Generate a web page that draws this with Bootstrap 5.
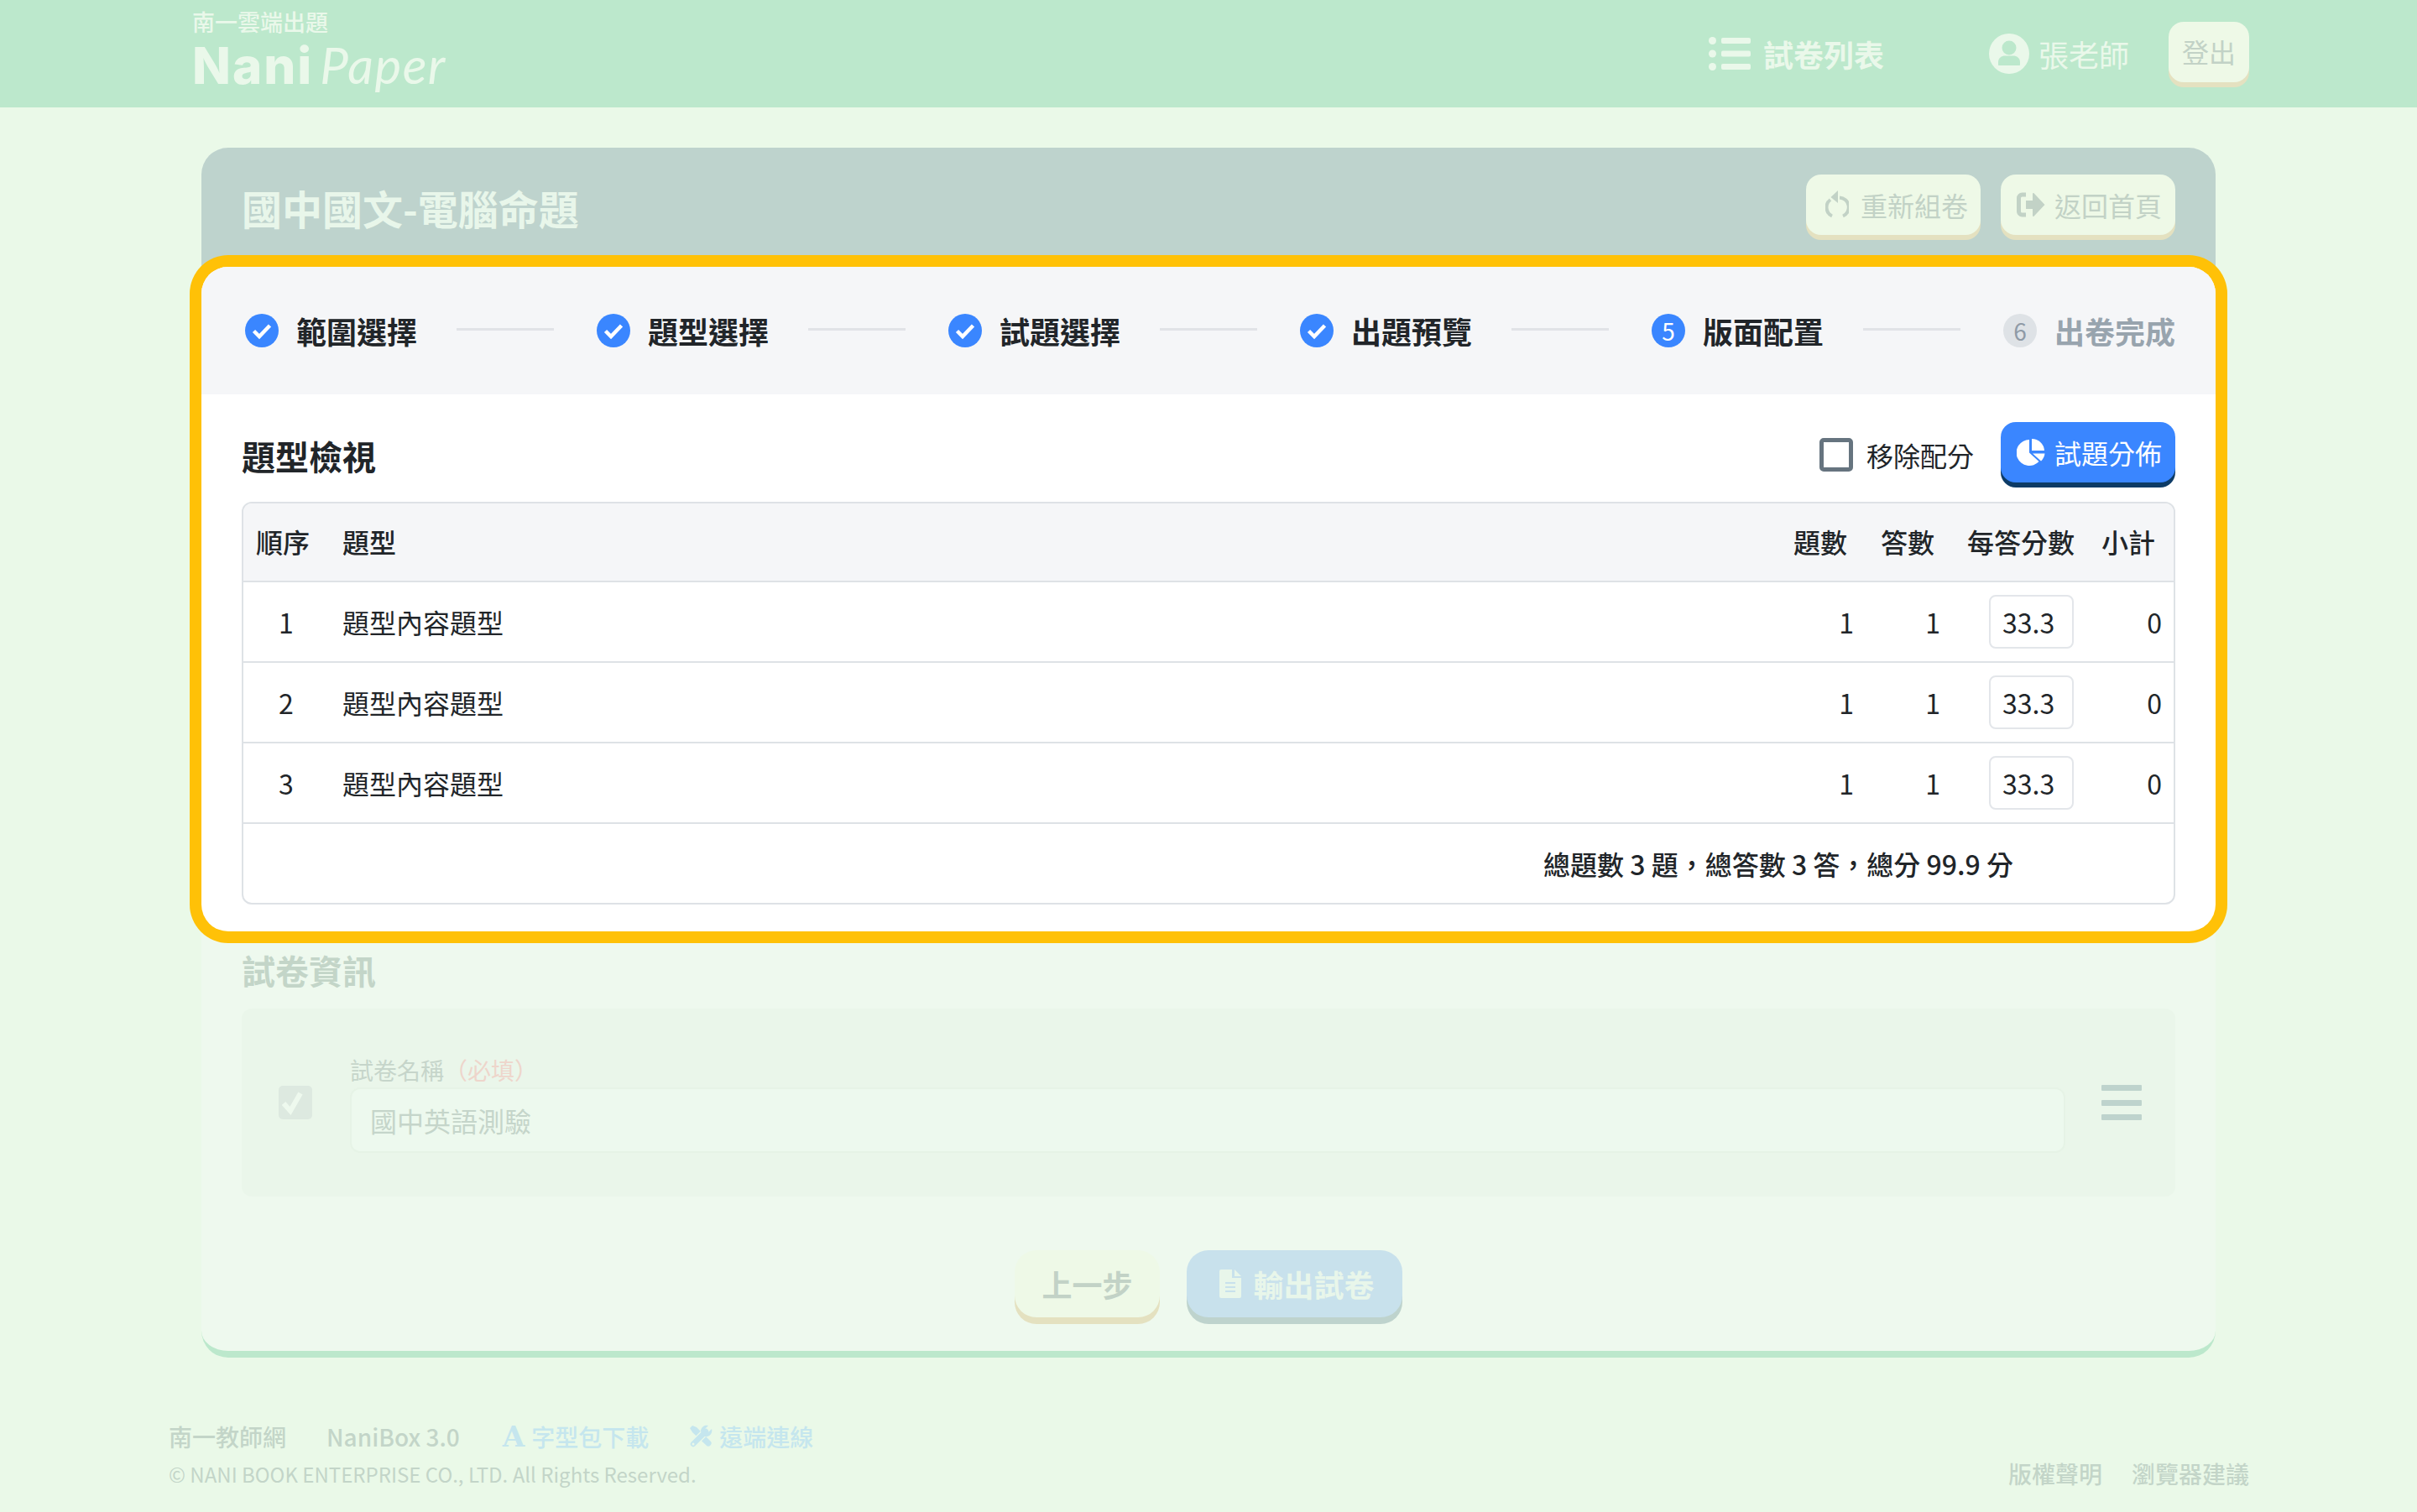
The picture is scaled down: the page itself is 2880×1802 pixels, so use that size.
<!DOCTYPE html>
<html lang="zh-Hant">
<head>
<meta charset="UTF-8">
<meta name="viewport" content="width=device-width, initial-scale=1.0">
<title>NaniPaper 版面配置</title>
<link href="https://cdn.jsdelivr.net/npm/bootstrap@5.3.0/dist/css/bootstrap.min.css" rel="stylesheet">
<style>
html { font-size: 32px; }
body { font-family: "Noto Sans CJK TC", "Noto Sans", sans-serif; background: #eaf9e8; color: #212529; height: 1802px; overflow: hidden; }
.top-bar { height: 128px; background: #bce8cc; padding: 0 200px 0 229px; color: #eaf8ea; }
.brand-box { align-self: flex-start; line-height: 1; padding-top: 11px; color: #eaf8ea; }
.brand-sub { font-size: 27px; line-height: 30px; font-weight: 500; }
.brand-logo { display: flex; align-items: baseline; height: 70px; margin-top: 1px; }
.logo-nani { font-family: Inter, sans-serif; font-weight: 800; font-size: 60px; line-height: 70px; letter-spacing: 2px; }
.logo-paper { font-family: Lato, sans-serif; font-style: italic; font-weight: 400; font-size: 60px; line-height: 70px; margin-left: 8px; letter-spacing: 1.500px; }
.nav-list { gap: 15px; margin-right: 125px; font-size: 36px; font-weight: 700; line-height: 48px; }
.nav-user { gap: 11px; margin-right: 47px; font-size: 36px; line-height: 48px; }
.soft-btn { background: #eef9e7; color: #c2d2c6; border: 0; border-radius: 18px; height: 72px; box-shadow: 0 6px 0 #e4e1c0; padding: 0 16px; font-size: 32px; line-height: 1; }
.soft-btn:disabled { background: #eef9e7; color: #c2d2c6; opacity: 1; }
.logout-btn { width: 96px; margin-top: -4px; justify-content: center; padding-bottom: 2px; }
.paper-card { margin: 48px 240px 0; width: 2400px; background: #eef9ee; border-radius: 32px; border-bottom: 8px solid #bce8cc; height: 1442px; }
.paper-head { height: 142px; background: #bed3cd; border-radius: 32px 32px 0 0; padding: 32px 48px 0 48px; }
.paper-title { font-size: 48px; font-weight: 700; color: #e8f6ea; line-height: 78px; margin: 0; letter-spacing: 0; }
.head-btns { gap: 24px; }
.head-btn { width: 208px; padding: 0 0 0 23px; gap: 14px; justify-content: flex-start; }
.head-btn.back-btn { padding-left: 19px; gap: 11px; }
.spot-box { height: 792px; background: #fff; border-radius: 32px; box-shadow: 0 0 0 14px #ffc107; position: relative; }
.steps-bar { height: 152px; background: #f5f6f8; padding: 0 48px 0 52px; border-radius: 32px 32px 0 0; }
.step-item { gap: 21px; font-size: 36px; font-weight: 700; line-height: 40px; white-space: nowrap; }
.step-mute { color: #98a4ae; }
.step-num { width: 40px; height: 40px; border-radius: 50%; background: #3a86ff; color: #fff; font-size: 28px; font-weight: 400; }
.step-num.todo { background: #dee2e6; color: #8f9aa6; }
.step-line { flex: 1; height: 3px; background: #e1e3e7; margin: -4px 51px 0 47px; }
.spot-body { padding: 33px 48px 32px; }
.spot-title { height: 78px; margin-bottom: 17px; }
.spot-title h2 { font-size: 40px; font-weight: 700; margin: 2px 0 0; }
.nums-check { gap: 16px; margin-right: 32px; margin-bottom: 0; padding: 0; min-height: 0; }
.nums-check .form-check-input { width: 40px; height: 40px; margin: 0; float: none; border: 5px solid #66747f; border-radius: 5px; }
.blue-btn { background: #3a86ff; color: #fff; border: 0; border-radius: 18px; height: 72px; width: 208px; box-shadow: 0 6px 0 #0d3b66; padding: 0 0 0 19px; gap: 11px; margin-top: -6px; font-size: 32px; line-height: 1; }
.type-wrap { border: 2px solid #dee2e6; border-radius: 12px; overflow: hidden; height: 480px; }
.type-table { table-layout: fixed; margin: 0; --bs-table-border-color: #dee2e6; color: #212529; }
.type-table th, .type-table td { border-bottom-width: 2px; vertical-align: middle; padding: 0 16px; height: 96px; font-weight: 400; }
.type-table td:last-child { padding-right: 14px; }
.type-table thead th { background: #f5f6f8; height: 93px; font-weight: 500; border-bottom-color: #dee2e6; white-space: nowrap; padding-right: 0; padding-bottom: 2px; }
.type-table thead th:first-child { padding-left: 15px; }
.type-table thead th:last-child { padding-left: 17px; }
.type-table tfoot td:last-child { height: 95px; border-bottom: 0; padding-right: 191px; text-align: right; font-weight: 500; }
.score-box { display: inline-block; width: 101px; height: 64px; padding: 0 14px; border: 2px solid #e3e6ea; border-radius: 8px; color: #212529; font-size: 32px; }
.info-part { padding: 16px 48px 0; }
.info-title { font-size: 40px; line-height: 60px; font-weight: 700; color: #c3d5c8; margin: 0 0 16px; }
.info-row { height: 224px; background: #eaf6ea; border-radius: 12px; padding: 0 40px 0 44px; gap: 45px; }
.info-check.form-check-input:checked[type=checkbox] { width: 40px; height: 40px; margin: 0; flex: none; border: 0; border-radius: 5px; background-color: #dde9e0; background-size: 100% 100%; --bs-form-check-bg-image: url("data:image/svg+xml,%3csvg xmlns='http://www.w3.org/2000/svg' viewBox='0 0 40 40'%3e%3cpath d='M6 21l8 9L26 9' fill='none' stroke='%23eef9ee' stroke-width='6'/%3e%3c/svg%3e"); }
.info-label { font-size: 28px; line-height: 42px; color: #c6d5ca; margin: 0; display: block; }
.info-must { color: #eed5cb; }
.info-input { height: 78px; background: #edf9ee; border: 2px solid #e6f3e6; border-radius: 12px; padding: 0 22px; font-size: 32px; }
.info-input:disabled, .info-input::placeholder { background: #edf9ee; color: #c5d5ca; opacity: 1; }
.drag-bars { width: 48px; height: 42px; margin-left: -2px; flex: none; }
.drag-bars span { height: 7px; background: #bed3cd; border-radius: 1px; display: block; }
.foot-btns { gap: 32px; margin-top: 64px; }
.big-btn { height: 80px; border-radius: 26px; box-shadow: 0 8px 0 #e4e1c0; font-size: 36px; font-weight: 700; padding: 0 32px; }
.send-btn { background: #c8e1ec; color: #e8f6ea; box-shadow: 0 8px 0 #bed3cd; gap: 15px; padding: 0 33px 0 39px; }
.send-btn:disabled { background: #c8e1ec; color: #e8f6ea; }
.page-foot { padding: 73px 200px 0 201px; font-size: 28px; color: #c3d5c8; line-height: 42px; }
.foot-links { gap: 48px; font-weight: 500; }
.foot-blue { color: #c5e6ee; gap: 8px; }
.foot-font { margin-left: 3px; }
.foot-a { font-family: "DejaVu Serif", serif; font-weight: 700; font-size: 34px; line-height: 42px; }
.foot-copy { font-size: 24px; line-height: 42px; margin-top: 3px; }
.foot-right { gap: 35px; font-weight: 500; padding-bottom: 1px; }
</style>
</head>
<body>

<nav class="navbar top-bar flex-nowrap justify-content-start">
  <a class="brand-box text-decoration-none" href="#">
    <div class="brand-sub">南一雲端出題</div>
    <div class="brand-logo"><span class="logo-nani">Nani</span><span class="logo-paper">Paper</span></div>
  </a>
  <div class="d-flex align-items-center nav-list ms-auto">
    <svg width="50" height="40" viewBox="0 0 50 40" fill="#eaf8ea"><circle cx="4.500" cy="4.500" r="4.500"/><circle cx="4.500" cy="20" r="4.500"/><circle cx="4.500" cy="35.500" r="4.500"/><rect x="15" y="1" width="35" height="7" rx="2"/><rect x="15" y="16.500" width="35" height="7" rx="2"/><rect x="15" y="32" width="35" height="7" rx="2"/></svg>
    <span>試卷列表</span>
  </div>
  <div class="d-flex align-items-center nav-user">
    <svg width="48" height="48" viewBox="0 0 48 48"><circle cx="24" cy="24" r="24" fill="#eaf8ea"/><circle cx="24" cy="17" r="8.500" fill="#bce8cc"/><path d="M11 37v-3c0-5 4-7.500 8-7.500h10c4 0 8 2.500 8 7.500v3c0 .6-.4 1-1 1H12c-.6 0-1-.4-1-1z" fill="#bce8cc"/></svg>
    <span>張老師</span>
  </div>
  <button class="btn soft-btn logout-btn d-flex align-items-center" type="button">登出</button>
</nav>

<main class="paper-card">
  <div class="paper-head d-flex justify-content-between align-items-start">
    <h1 class="paper-title">國中國文-電腦命題</h1>
    <div class="d-flex head-btns">
      <button class="btn soft-btn head-btn d-flex align-items-center" type="button">
        <svg width="28" height="34" viewBox="0 0 28 34" fill="none" stroke="#c2d2c6" stroke-width="4"><path d="M17 8.500a11.500 11.500 0 0 1 4 22"/><path d="M8 30.500A11.500 11.500 0 0 1 6 11"/><path d="M15 0v15L6.500 8z" fill="#c2d2c6" stroke="none"/></svg>
        <span>重新組卷</span>
      </button>
      <button class="btn soft-btn head-btn back-btn d-flex align-items-center" type="button">
        <svg width="34" height="30" viewBox="0 0 34 30" fill="none"><path d="M11 3H6.500A4 4 0 0 0 2.500 7v16a4 4 0 0 0 4 4H11" stroke="#c2d2c6" stroke-width="5"/><path d="M11 10h8V2c0-.8.900-1.200 1.500-.7L33.500 15 20.500 28.700c-.6.500-1.500.1-1.500-.7V20h-8z" fill="#c2d2c6"/></svg>
        <span>返回首頁</span>
      </button>
    </div>
  </div>

  <section class="spot-box">
    <div class="steps-bar d-flex align-items-center">
      <div class="step-item d-flex align-items-center"><svg width="40" height="40" viewBox="0 0 40 40"><circle cx="20" cy="20" r="20" fill="#3a86ff"/><path d="M10.500 20.500l6.500 6.500 12.500-13" fill="none" stroke="#fff" stroke-width="4.500"/></svg><span>範圍選擇</span></div>
      <div class="step-line"></div>
      <div class="step-item d-flex align-items-center"><svg width="40" height="40" viewBox="0 0 40 40"><circle cx="20" cy="20" r="20" fill="#3a86ff"/><path d="M10.500 20.500l6.500 6.500 12.500-13" fill="none" stroke="#fff" stroke-width="4.500"/></svg><span>題型選擇</span></div>
      <div class="step-line"></div>
      <div class="step-item d-flex align-items-center"><svg width="40" height="40" viewBox="0 0 40 40"><circle cx="20" cy="20" r="20" fill="#3a86ff"/><path d="M10.500 20.500l6.500 6.500 12.500-13" fill="none" stroke="#fff" stroke-width="4.500"/></svg><span>試題選擇</span></div>
      <div class="step-line"></div>
      <div class="step-item d-flex align-items-center"><svg width="40" height="40" viewBox="0 0 40 40"><circle cx="20" cy="20" r="20" fill="#3a86ff"/><path d="M10.500 20.500l6.500 6.500 12.500-13" fill="none" stroke="#fff" stroke-width="4.500"/></svg><span>出題預覽</span></div>
      <div class="step-line"></div>
      <div class="step-item d-flex align-items-center"><span class="step-num d-flex align-items-center justify-content-center">5</span><span>版面配置</span></div>
      <div class="step-line"></div>
      <div class="step-item step-mute d-flex align-items-center"><span class="step-num todo d-flex align-items-center justify-content-center">6</span><span>出卷完成</span></div>
    </div>

    <div class="spot-body">
      <div class="spot-title d-flex align-items-center">
        <h2>題型檢視</h2>
        <label class="form-check nums-check d-flex align-items-center ms-auto">
          <input class="form-check-input" type="checkbox">
          <span>移除配分</span>
        </label>
        <button class="btn blue-btn d-flex align-items-center" type="button">
          <svg width="34" height="32" viewBox="0 0 34 32" fill="#fff"><path d="M15 1A15.500 15.500 0 1 0 26.500 27L15 16.500z"/><path d="M18 0a15 15 0 0 1 15 14H18z"/><path d="M19 17.500h14.500a15 15 0 0 1-4.500 9z"/></svg>
          <span>試題分佈</span>
        </button>
      </div>

      <div class="type-wrap">
        <table class="table type-table">
          <colgroup><col style="width:102px"><col><col style="width:104px"><col style="width:103px"><col style="width:159px"><col style="width:103px"></colgroup>
          <thead>
            <tr><th>順序</th><th>題型</th><th>題數</th><th>答數</th><th>每答分數</th><th>小計</th></tr>
          </thead>
          <tbody>
            <tr><td class="text-center">1</td><td>題型內容題型</td><td class="text-end">1</td><td class="text-end">1</td><td class="text-end"><input class="form-control score-box" type="text" value="33.3"></td><td class="text-end">0</td></tr>
            <tr><td class="text-center">2</td><td>題型內容題型</td><td class="text-end">1</td><td class="text-end">1</td><td class="text-end"><input class="form-control score-box" type="text" value="33.3"></td><td class="text-end">0</td></tr>
            <tr><td class="text-center">3</td><td>題型內容題型</td><td class="text-end">1</td><td class="text-end">1</td><td class="text-end"><input class="form-control score-box" type="text" value="33.3"></td><td class="text-end">0</td></tr>
          </tbody>
          <tfoot>
            <tr><td colspan="6">總題數 3 題，總答數 3 答，總分 99.9 分</td></tr>
          </tfoot>
        </table>
      </div>
    </div>
  </section>

  <section class="info-part">
    <h2 class="info-title">試卷資訊</h2>
    <div class="info-row d-flex align-items-center">
      <input class="form-check-input info-check" type="checkbox" checked>
      <div class="flex-grow-1">
        <label class="info-label">試卷名稱<span class="info-must">（必填）</span></label>
        <input class="form-control info-input" type="text" placeholder="國中英語測驗" disabled>
      </div>
      <div class="drag-bars d-flex flex-column justify-content-between"><span></span><span></span><span></span></div>
    </div>
    <div class="d-flex justify-content-center foot-btns">
      <button class="btn soft-btn big-btn d-flex align-items-center" type="button">上一步</button>
      <button class="btn soft-btn big-btn send-btn d-flex align-items-center" type="button">
        <svg width="26" height="34" viewBox="0 0 26 34"><path d="M2 0h13v10h11v22a2 2 0 0 1-2 2H2a2 2 0 0 1-2-2V2a2 2 0 0 1 2-2z" fill="#e8f6ea"/><path d="M18 0l8 8h-8z" fill="#e8f6ea"/><path d="M7 16h12M7 21h12M7 26h12" stroke="#c8e1ec" stroke-width="2"/></svg>
        <span>輸出試卷</span>
      </button>
    </div>
  </section>
</main>

<footer class="page-foot d-flex justify-content-between align-items-end">
  <div>
    <div class="d-flex foot-links">
      <span>南一教師網</span>
      <span>NaniBox 3.0</span>
      <span class="d-flex foot-blue foot-font align-items-center"><span class="foot-a">A</span><span>字型包下載</span></span>
      <span class="d-flex foot-blue align-items-center">
        <svg width="28" height="28" viewBox="0 0 28 28"><path d="M1 4l3-3 5 2 16.500 16.500a3.500 3.500 0 0 1-5 5L4 9z" fill="#c5e6ee"/><path d="M5 23L20 8" stroke="#eaf9e8" stroke-width="9"/><path d="M5 23L20 8" stroke="#c5e6ee" stroke-width="6.500" stroke-linecap="round"/><path d="M14 8a7 7 0 0 1 9-7l-4 4 1 3 3 1 4-4a7 7 0 0 1-8 9z" fill="#c5e6ee"/><circle cx="5" cy="23" r="1.500" fill="#eaf9e8"/></svg>
        <span>遠端連線</span>
      </span>
    </div>
    <div class="foot-copy">© NANI BOOK ENTERPRISE CO., LTD. All Rights Reserved.</div>
  </div>
  <div class="d-flex foot-right"><span>版權聲明</span><span>瀏覽器建議</span></div>
</footer>

<script src="https://cdn.jsdelivr.net/npm/bootstrap@5.3.0/dist/js/bootstrap.bundle.min.js"></script>
</body>
</html>
